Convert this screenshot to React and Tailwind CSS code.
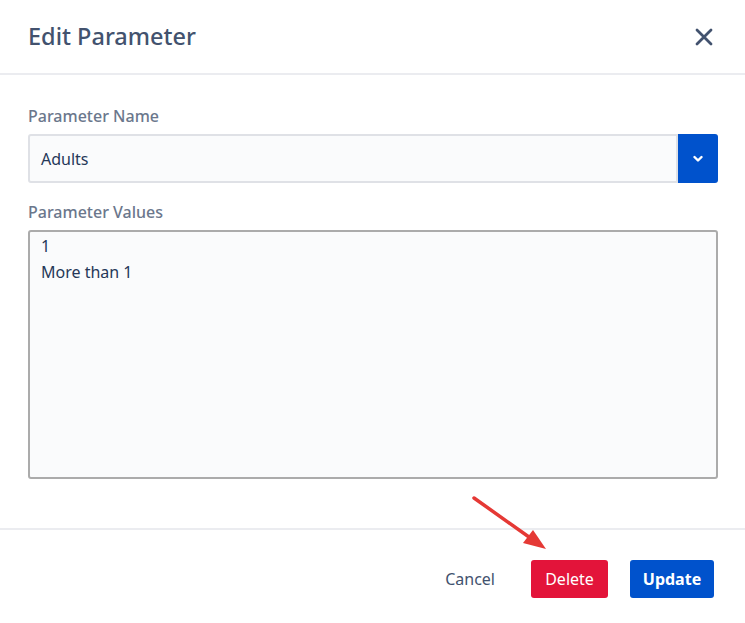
import React from 'react';

const font = { fontFamily: '"Noto Sans", "Open Sans", sans-serif' };

const CloseIcon = () => (
  <svg width="18" height="18" viewBox="0 0 18 18" fill="none">
    <path d="M2 2L16 16M16 2L2 16" stroke="#42526e" strokeWidth="2.8" strokeLinecap="round" />
  </svg>
);

const ChevronDown = () => (
  <svg width="10" height="8" viewBox="0 0 10 8" fill="none">
    <path d="M1.5 2L5 5.5L8.5 2" stroke="white" strokeWidth="2.4" strokeLinecap="round" strokeLinejoin="round" />
  </svg>
);

// red annotation arrow over the footer divider
const Arrow = () => (
  <svg className="absolute left-0 top-0 pointer-events-none" width="745" height="623">
    <line x1="474" y1="498" x2="536" y2="542" stroke="#e53935" strokeWidth="3.5" strokeLinecap="round" />
    <polygon points="546,549 523,543 533,530" fill="#e53935" />
  </svg>
);

const EditParameter = () => {
  return (
    <div className="relative w-[745px] h-[623px] bg-white" style={font}>
      <div className="h-[75px] pl-7 pr-7 flex items-center justify-between border-b-2 border-[#ebecf0]">
        <h1 className="text-[23.5px] font-medium text-[#42526e]">Edit Parameter</h1>
        <button className="mr-[4px] mt-[1px]">
          <CloseIcon />
        </button>
      </div>

      <div className="pl-7 pr-[27px] pt-[29px] pb-[49px] border-b-2 border-[#ebecf0]">
        <label className="block text-[16px] leading-6 font-medium text-[#6b778c] mb-[6px]">Parameter Name</label>
        <div className="flex h-[49px]">
          <div className="flex-1 flex items-center px-[11px] bg-[#fafbfc] border-2 border-[#dfe1e6] rounded-l-[3px] text-[16px] text-[#253858]">
            Adults
          </div>
          <button className="w-[40px] flex items-center justify-center bg-[#0052cc] rounded-r-[3px]">
            <ChevronDown />
          </button>
        </div>

        <label className="block mt-[17px] text-[16px] leading-6 font-medium text-[#6b778c] mb-[6px]">Parameter Values</label>
        <div className="h-[249px] px-[11px] pt-[1px] bg-[#fafbfc] border-2 border-[#ababab] rounded-[3px] text-[16px] leading-[26px] text-[#253858]">
          <div>1</div>
          <div>More than 1</div>
        </div>
      </div>

      <div className="flex items-center justify-end gap-[22px] pt-[30px] pr-[31px]">
        <button className="px-[14px] h-[38px] text-[16px] text-[#42526e]">Cancel</button>
        <button className="w-[77px] h-[38px] rounded-[3px] bg-[#e3143a] text-white text-[16px]">Delete</button>
        <button className="w-[84px] h-[38px] rounded-[3px] bg-[#0052cc] text-white text-[16px] font-bold">Update</button>
      </div>

      <Arrow />
    </div>
  );
};

export default EditParameter;
